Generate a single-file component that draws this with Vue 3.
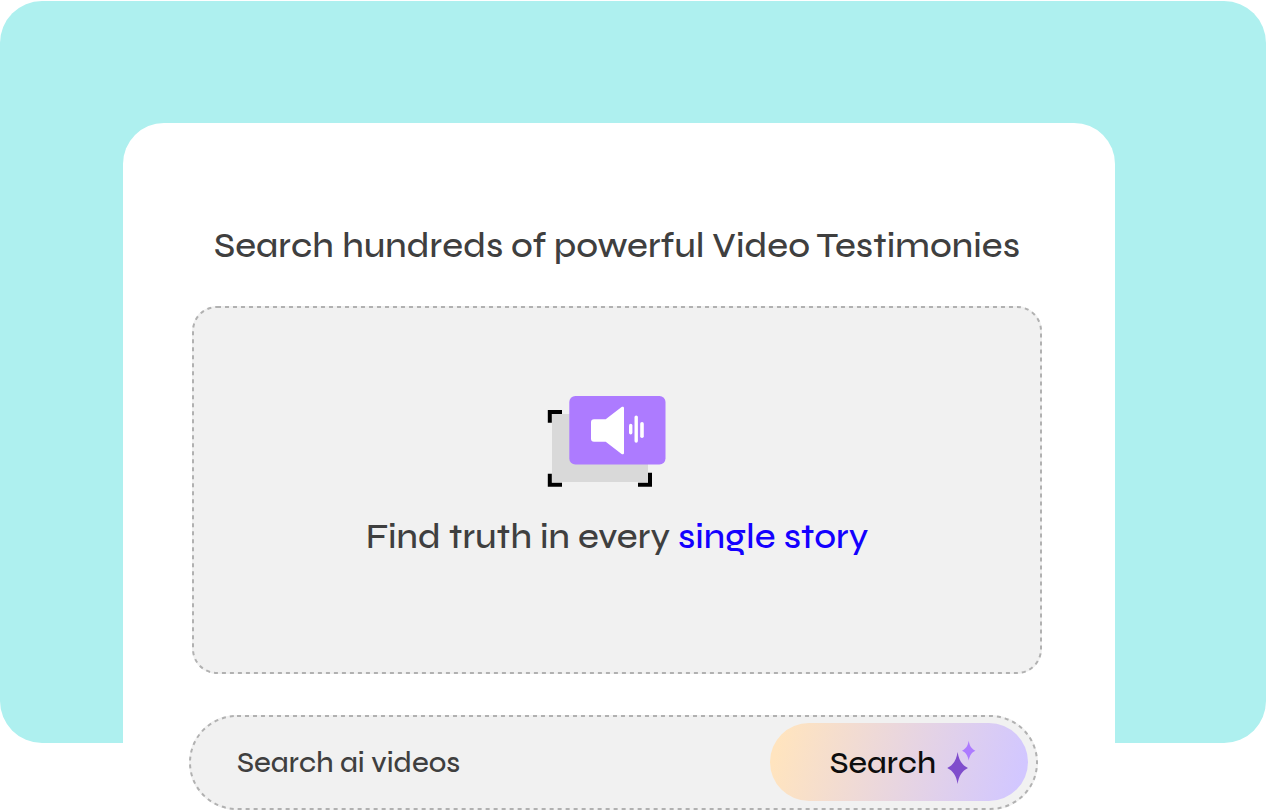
<template>
  <main class="stage">
    <section class="card">
      <h1 class="title">Search hundreds of powerful Video Testimonies</h1>

      <div class="panel">
        <svg class="dashes" aria-hidden="true">
          <rect x="1" y="1" rx="24" />
        </svg>
        <svg class="media-icon" viewBox="0 0 141 93" aria-hidden="true">
          <path fill="#d9d9d9" d="M5 19h96v68H5z" />
          <path
            fill="none"
            stroke="#000"
            stroke-width="4"
            d="M2.8 27.7V17H15M2.8 78.7v11H15M91 89.7h12v-12"
          />
          <rect x="22.3" y="1" width="96.2" height="68.6" rx="6" fill="#ad7bff" />
          <path
            fill="#fff"
            d="M47 24.3h11.7L74.6 12.1c1-.8 2.4-.4 2.4 1v44.8c0 1.4-1.4 1.8-2.4 1L58.7 46.7H47q-3 0-3-3V27.3q0-3 3-3z"
          />
          <rect x="82" y="28.8" width="3.4" height="10.6" rx="1.7" fill="#fff" />
          <rect x="87.5" y="20.4" width="3.4" height="27.4" rx="1.7" fill="#fff" />
          <rect x="93.2" y="27" width="3.6" height="16" rx="1.8" fill="#fff" />
        </svg>
        <p class="tagline">Find truth in every <a href="#">single story</a></p>
      </div>

      <form class="search" @submit.prevent>
        <svg class="dashes" aria-hidden="true">
          <rect x="1" y="1" rx="47" />
        </svg>
        <input
          v-model="query"
          class="search-input"
          type="text"
          placeholder="Search ai videos"
          aria-label="Search ai videos"
        />
        <button class="search-button" type="submit">
          Search
          <svg class="sparkles" viewBox="0 0 30 45" aria-hidden="true">
            <path
              fill="#7f4dcc"
              d="M11.6 12C13 20.5 16 25 22 28 16 31 13 35.5 11.6 44 10.2 35.5 7.2 31 1.2 28 7.2 25 10.2 20.5 11.6 12z"
            />
            <path
              fill="#ad7bff"
              d="M22.7 .8C23.6 6 25.5 8.8 29.4 10.7 25.5 12.6 23.6 15.4 22.7 20.6 21.8 15.4 19.9 12.6 16 10.7 19.9 8.8 21.8 6 22.7 .8z"
            />
          </svg>
        </button>
      </form>
    </section>
  </main>
</template>

<script setup>
import { ref } from "vue";

const query = ref("");
</script>

<style>
body {
  background: #ffffff;
}
</style>

<style scoped>
.stage {
  margin-top: 1px;
  margin-bottom: 67px;
  padding: 122px 151px 0 123px;
  background: #aef0ef;
  border-radius: 42px;
  font-family: Syne, Inter, sans-serif;
  font-weight: 500;
  color: #3f3f3f;
}

.card {
  display: flex;
  flex-direction: column;
  background: #ffffff;
  border-radius: 41px 41px 0 0;
}

.title {
  margin: 99px 0 36px;
  padding-right: 4px;
  font-size: 36px;
  font-weight: 500;
  line-height: 48px;
  text-align: center;
  white-space: nowrap;
}

.panel {
  position: relative;
  display: flex;
  flex-direction: column;
  align-items: center;
  margin: 0 73px 41px 69px;
  padding: 89px 0 113px;
  background: #f1f1f1;
  border-radius: 25px;
}

/* 虚线边框 */
.dashes {
  position: absolute;
  inset: 0;
  width: 100%;
  height: 100%;
  pointer-events: none;
}

.dashes rect {
  width: calc(100% - 2px);
  height: calc(100% - 2px);
  fill: none;
  stroke: #b1b1b1;
  stroke-width: 2px;
  stroke-dasharray: 4 4;
}

.media-icon {
  width: 141px;
  height: 93px;
}

.tagline {
  margin: 25px 0 0;
  font-size: 36px;
  line-height: 48px;
  white-space: nowrap;
}

.tagline a {
  color: #1400ff;
  text-decoration: none;
}

/* 搜索栏超出卡片底部 */
.search {
  position: relative;
  display: flex;
  align-items: center;
  margin: 0 77px -67px 66px;
  padding: 8px 10px 9px 48px;
  background: #f1f1f1;
  border-radius: 48px;
}

.search-input {
  flex: 1;
  min-width: 0;
  padding: 0;
  border: none;
  outline: none;
  background: transparent;
  font-family: inherit;
  font-size: 29px;
  font-weight: 500;
  color: #3f3f3f;
}

.search-input::placeholder {
  color: #3f3f3f;
  opacity: 1;
}

.search-button {
  display: flex;
  align-items: center;
  justify-content: center;
  gap: 10px;
  width: 258px;
  height: 78px;
  padding: 0 0 0 8px;
  border: none;
  border-radius: 39px;
  background: linear-gradient(105deg, #ffe4bf 5%, #d2c7ff 95%);
  font-family: inherit;
  font-size: 32px;
  font-weight: 500;
  color: #0d0d0d;
  cursor: pointer;
}

.sparkles {
  width: 30px;
  height: 45px;
}
</style>
